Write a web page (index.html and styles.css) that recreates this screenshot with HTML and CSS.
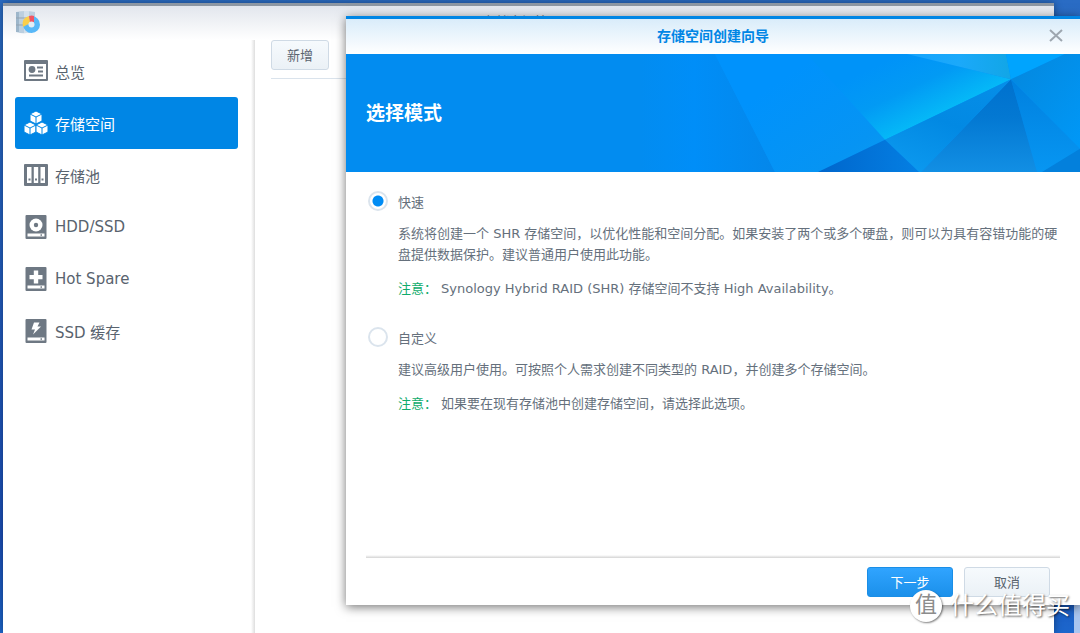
FILE: index.html
```html
<!DOCTYPE html>
<html lang="zh-CN">
<head>
<meta charset="utf-8">
<title>存储空间管理员</title>
<link rel="stylesheet" href="styles.css">
</head>
<body>
<div class="desktop">
  <div class="window">
    <header class="window-header">
      <svg class="app-icon" width="26" height="26" viewBox="0 0 26 26">
        <path d="M1 2Q10 0 20 2V21Q10 25 1 22Z" fill="#bccfdf"/>
        <path d="M1 2H4V22H1Z" fill="#9db6ca"/>
        <path d="M9 1H14V23H9Z" fill="#d3e0eb"/>
        <path d="M1 8H20M1 15H20" stroke="#93a3b1" stroke-width="1"/>
        <path d="M17 6A8.500 8.500 0 1 1 8 15L17 14Z" fill="#58b8f8"/>
        <path d="M14 6Q15 10 15 13L8 17Q6 8 14 6Z" fill="#fbcf4b"/>
        <path d="M14 6Q17 5 19 6L19 12L15 12Z" fill="#f15463"/>
        <circle cx="16.500" cy="14.500" r="3" fill="#e3edf5"/>
      </svg>
      <h1 class="window-title">存储空间管理员</h1>
    </header>
    <div class="window-body">
      <nav class="sidebar">
        <a class="nav-item" href="#overview">
          <svg class="nav-icon" viewBox="0 0 24 24"><path fill="currentColor" fill-rule="evenodd" d="M1 1H23Q24 1 24 2V21Q24 22 23 22H1Q0 22 0 21V2Q0 1 1 1ZM2 5V20H22V5Z"/><circle cx="8" cy="10.500" r="3.400" fill="currentColor"/><path d="M13 8.500H19M14 12.500H19M5 16.500H19" stroke="currentColor" stroke-width="2"/></svg>
          <span>总览</span>
        </a>
        <a class="nav-item active" href="#volume" aria-current="page">
          <svg class="nav-icon" viewBox="0 0 24 24">
            <g fill="#fff" stroke="#0086e5" stroke-width="1" stroke-linejoin="round">
              <path d="M12 0L18 3V10L12 13L6 10V3Z"/><path d="M6 3L12 6L18 3M12 6V13" fill="none"/>
              <path d="M6 11L12 14V21L6 24L0 21V14Z"/><path d="M0 14L6 17L12 14M6 17V24" fill="none"/>
              <path d="M18 11L24 14V21L18 24L12 21V14Z"/><path d="M12 14L18 17L24 14M18 17V24" fill="none"/>
            </g>
          </svg>
          <span>存储空间</span>
        </a>
        <a class="nav-item" href="#pool">
          <svg class="nav-icon" viewBox="0 0 24 24"><rect y="1" width="24" height="22" rx="1" fill="currentColor"/><path d="M3 4H7.500V20H3ZM9.800 4H14.200V20H9.800ZM16.500 4H21V20H16.500Z" fill="#fff"/><path d="M4.500 15.500H6.500V17.500H4.500ZM11 15.500H13V17.500H11ZM17.500 15.500H19.500V17.500H17.500Z" fill="currentColor"/></svg>
          <span>存储池</span>
        </a>
        <a class="nav-item" href="#disks">
          <svg class="nav-icon" viewBox="0 0 24 24"><rect x="1.500" width="21" height="24" rx="1" fill="currentColor"/><circle cx="12" cy="10" r="6.500" fill="#fff"/><circle cx="12" cy="10" r="2.200" fill="currentColor"/><rect x="3.500" y="18.500" width="17" height="3" fill="#fff"/><rect x="16.500" y="19.300" width="1.500" height="1.500" fill="currentColor"/></svg>
          <span>HDD/SSD</span>
        </a>
        <a class="nav-item" href="#spare">
          <svg class="nav-icon" viewBox="0 0 24 24"><rect x="1.500" width="21" height="24" rx="1" fill="currentColor"/><path d="M9.800 3.500H14.200V8H18.500V12.300H14.200V16.500H9.800V12.300H5.500V8H9.800Z" fill="#fff"/><rect x="3.500" y="18.500" width="17" height="3" fill="#fff"/><rect x="16.500" y="19.300" width="1.500" height="1.500" fill="currentColor"/></svg>
          <span>Hot Spare</span>
        </a>
        <a class="nav-item" href="#cache">
          <svg class="nav-icon" viewBox="0 0 24 24"><rect x="1.500" width="21" height="24" rx="1" fill="currentColor"/><path d="M10 3.500H15.500L13.500 7.500H17L9 15.500L11 10.500H7.500Z" fill="#fff"/><rect x="3.500" y="18.500" width="17" height="3" fill="#fff"/><rect x="16.500" y="19.300" width="1.500" height="1.500" fill="currentColor"/></svg>
          <span>SSD 缓存</span>
        </a>
      </nav>
      <main class="content">
        <div class="toolbar"><button class="btn btn-small" type="button">新增</button></div>
      </main>
    </div>
  </div>

  <form class="dialog" role="dialog" aria-labelledby="dialog-title">
    <header class="dialog-header">
      <h2 class="dialog-title" id="dialog-title">存储空间创建向导</h2>
      <button class="close" type="button" aria-label="关闭">
        <svg width="14" height="14" viewBox="0 0 14 14"><path d="M1 1L13 12M13 1L1 12" stroke="currentColor" stroke-width="2"/></svg>
      </button>
    </header>
    <div class="banner">
      <svg class="banner-art" width="440" height="117" viewBox="0 0 440 117" preserveAspectRatio="none">
        <defs>
          <linearGradient id="g1"><stop offset="0" stop-color="#028cf0"/><stop offset="0.400" stop-color="#008ef8"/><stop offset="1" stop-color="#0487ea"/></linearGradient>
          <linearGradient id="g2" x1="0" y1="0" x2="1" y2="1"><stop offset="0.300" stop-color="#0092fc"/><stop offset="0.800" stop-color="#0694f3"/><stop offset="1" stop-color="#0a9cf0"/></linearGradient>
          <linearGradient id="g3" gradientUnits="userSpaceOnUse" x1="260" y1="0" x2="290" y2="63"><stop offset="0" stop-color="#0093f8"/><stop offset="0.500" stop-color="#029af4"/><stop offset="1" stop-color="#05b8f7"/></linearGradient>
          <linearGradient id="g4"><stop offset="0" stop-color="#17a4fd"/><stop offset="0.500" stop-color="#1ba9fa"/><stop offset="1" stop-color="#12a6e6"/></linearGradient>
          <linearGradient id="g5" x1="0.800" y1="0" x2="0.300" y2="1"><stop offset="0" stop-color="#058ee8"/><stop offset="0.500" stop-color="#0289e3"/><stop offset="1" stop-color="#0b98ee"/></linearGradient>
          <linearGradient id="g6" x1="0" y1="0" x2="0" y2="1"><stop offset="0" stop-color="#0071ce"/><stop offset="0.400" stop-color="#0378d2"/><stop offset="1" stop-color="#128fe4"/></linearGradient>
          <linearGradient id="g7" x1="0" y1="0" x2="0" y2="1"><stop offset="0" stop-color="#0080df"/><stop offset="1" stop-color="#0796f2"/></linearGradient>
          <linearGradient id="g8" x1="0" y1="0" x2="1" y2="1"><stop offset="0" stop-color="#0487dd"/><stop offset="1" stop-color="#0098f7"/></linearGradient>
          <linearGradient id="g9"><stop offset="0" stop-color="#0066cc"/><stop offset="1" stop-color="#047fe3"/></linearGradient>
        </defs>
        <rect width="440" height="117" fill="#0092fb"/>
        <path d="M0 0H75L135 117H0Z" fill="url(#g1)"/>
        <path d="M75 0H167L245 85L178 117H135Z" fill="url(#g2)"/>
        <path d="M167 0H267L371 25L245 85Z" fill="url(#g3)"/>
        <path d="M267 0H366L371 25Z" fill="url(#g4)"/>
        <path d="M366 0H425L371 25Z" fill="#00a4fe"/>
        <path d="M425 0H440V94L371 25Z" fill="url(#g8)"/>
        <path d="M371 25L440 94V117H397Z" fill="url(#g7)"/>
        <path d="M402 117L440 94V117Z" fill="#0380dc"/>
        <path d="M371 25L397 117H281Z" fill="url(#g6)"/>
        <path d="M371 25L281 117H279L245 85Z" fill="url(#g5)"/>
        <path d="M245 85L279 117H178Z" fill="url(#g9)"/>
      </svg>
      <h3 class="banner-title">选择模式</h3>
    </div>
    <div class="dialog-body">
      <section class="option">
        <div class="option-row">
          <input class="radio" type="radio" name="mode" id="mode-quick" checked>
          <label for="mode-quick">快速</label>
        </div>
        <p class="option-text">系统将创建一个 SHR 存储空间，以优化性能和空间分配。如果安装了两个或多个硬盘，则可以为具有容错功能的硬盘提供数据保护。建议普通用户使用此功能。</p>
        <p class="option-text"><span class="note">注意：</span>Synology Hybrid RAID (SHR) 存储空间不支持 High Availability。</p>
      </section>
      <section class="option">
        <div class="option-row">
          <input class="radio" type="radio" name="mode" id="mode-custom">
          <label for="mode-custom">自定义</label>
        </div>
        <p class="option-text">建议高级用户使用。可按照个人需求创建不同类型的 RAID，并创建多个存储空间。</p>
        <p class="option-text"><span class="note">注意：</span>如果要在现有存储池中创建存储空间，请选择此选项。</p>
      </section>
    </div>
    <footer class="dialog-footer">
      <button class="btn btn-primary" type="button">下一步</button>
      <button class="btn" type="button">取消</button>
    </footer>
  </form>

  <div class="watermark"><span class="watermark-badge">值</span><span class="watermark-text">什么值得买</span></div>
</div>
</body>
</html>
```
FILE: styles.css
```css
* { box-sizing: border-box; }

body {
  margin: 0;
  font-family: "DejaVu Sans", "Noto Sans CJK SC", sans-serif;
  font-size: 13px;
  color: #65707c;
}

h1, h2, h3, p { margin: 0; }

button, input { font: inherit; margin: 0; }

.desktop {
  position: relative;
  display: flex;
  min-height: 100vh;
  padding: 3px 26px 0 3px;
  overflow: hidden;
  background:
    linear-gradient(#a9c5ef, #a9c5ef) right bottom / 6px 28px no-repeat,
    linear-gradient(#2a6cc4, #1b4fb8 85%, #1c66cc);
}

.window {
  flex: 1;
  display: flex;
  flex-direction: column;
  border-top: 3px solid #8d97a3;
  background: #fff;
  box-shadow: 0 0 8px rgba(0, 0, 0, 0.4);
}

.window-header {
  display: grid;
  grid-template-columns: 26px 1fr 26px;
  height: 34px;
  padding: 4px 12px;
  background: linear-gradient(#e2e6ed, #fff);
}

.window-title {
  text-align: center;
  font-size: 13px;
  font-weight: 400;
  line-height: 24px;
}

.window-body { flex: 1; display: flex; }

.sidebar {
  width: 252px;
  padding: 5px 17px 0 12px;
  background: linear-gradient(90deg, rgba(0, 0, 0, 0), #dedede) right / 4px 100% no-repeat;
}

.nav-item {
  display: flex;
  align-items: center;
  gap: 7px;
  height: 52px;
  padding-left: 9px;
  border-radius: 3px;
  color: #59636e;
  font-size: 15px;
  text-decoration: none;
}

.nav-icon { width: 24px; height: 24px; color: #6e7883; }

.nav-item.active { background: #0086e5; color: #fff; }

.content { flex: 1; padding-left: 16px; }

.toolbar { padding-bottom: 8px; border-bottom: 1px solid #dae3ec; }

.btn {
  width: 86px;
  height: 30px;
  padding: 0 0 2px;
  border: 1px solid #cfdae5;
  border-radius: 3px;
  background: linear-gradient(#f6fafd, #ebf1f6);
  color: #59636e;
}

.btn-small { width: 58px; }

.btn-primary {
  border-color: #1a8ee6;
  background: linear-gradient(#30a4ff, #1b90ea);
  color: #fff;
}

.dialog {
  position: absolute;
  top: 16px;
  right: 0;
  bottom: 28px;
  left: 346px;
  display: flex;
  flex-direction: column;
  border-top: 3px solid #0086e5;
  background: #fff;
  box-shadow: 0 2px 10px rgba(0, 0, 0, 0.55);
}

.dialog-header {
  display: grid;
  grid-template-columns: 24px 1fr 24px;
  align-items: center;
  height: 35px;
  padding: 0 12px 2px;
  background: linear-gradient(#d9ecfa, #fff);
}

.dialog-title {
  grid-column: 2;
  text-align: center;
  font-size: 14px;
  line-height: 20px;
  color: #0086e5;
}

.close {
  display: flex;
  align-items: center;
  justify-content: center;
  height: 24px;
  padding: 0;
  border: 0;
  background: none;
  color: #9da6af;
}

.banner {
  position: relative;
  display: flex;
  align-items: center;
  height: 118px;
  padding: 0 20px;
  background: #028cf0;
}

.banner-art { position: absolute; top: 0; right: 0; height: 100%; }

.banner-title {
  position: relative;
  font-size: 19px;
  line-height: 28px;
  color: #fff;
}

.dialog-body { flex: 1; padding: 19px 20px 0 22px; }

.option { margin-bottom: 28px; }

.option-row { display: flex; align-items: center; gap: 10px; height: 20px; }

.radio {
  appearance: none;
  width: 20px;
  height: 20px;
  border: 2px solid #dbe4ed;
  border-radius: 50%;
  background: #fff;
}

.radio:checked { background: radial-gradient(circle, #008cf4 5px, #fff 6px); }

.option-text { margin-top: 12px; padding-left: 30px; line-height: 21px; }

.option-text + .option-text { margin-top: 13px; }

.note { margin-right: 4px; color: #10ab6c; }

.dialog-footer {
  display: flex;
  justify-content: flex-end;
  gap: 11px;
  margin: 0 20px;
  padding: 12px 10px 8px;
  background: linear-gradient(rgba(0, 0, 0, 0), #d4d4d4) top / 100% 3px no-repeat;
}

.watermark {
  position: absolute;
  right: 10px;
  bottom: 11px;
  display: flex;
  align-items: center;
  gap: 8px;
  color: #fff;
}

.watermark-badge {
  width: 32px;
  height: 32px;
  border-radius: 50%;
  background: #fff;
  box-shadow: 1px 1px 2px rgba(0, 0, 0, 0.5);
  color: #8c8c8c;
  font-size: 22px;
  line-height: 30px;
  text-align: center;
}

.watermark-text {
  font-size: 24px;
  line-height: 32px;
  text-shadow: 1px 1px 2px rgba(0, 0, 0, 0.6);
}
```
